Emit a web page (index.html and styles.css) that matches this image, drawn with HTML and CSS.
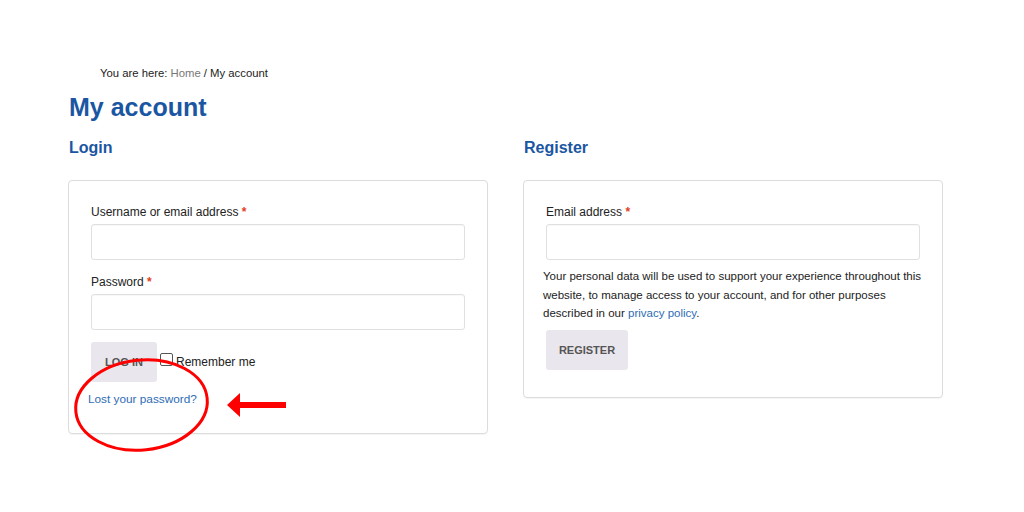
FILE: index.html
```html
<!DOCTYPE html>
<html>
<head>
<meta charset="utf-8">
<link rel="stylesheet" href="styles.css">
</head>
<body>
<div class="page">
  <nav class="crumbs">You are here: <a href="#" class="crumb-link">Home</a> / My account</nav>
  <h1 class="title">My account</h1>
  <div class="cols">
    <section class="col">
      <h2 class="col-title">Login</h2>
      <form class="box">
        <div class="row">
          <label class="lbl">Username or email address <span class="req">*</span></label>
          <input class="field" type="text">
        </div>
        <div class="row">
          <label class="lbl">Password <span class="req">*</span></label>
          <input class="field" type="password">
        </div>
        <div class="row row-inline">
          <button type="button" class="btn">LOG IN</button>
          <span class="check"></span>
          <span class="remember">Remember me</span>
        </div>
        <p class="lost"><a href="#" class="link">Lost your password?</a></p>
      </form>
    </section>
    <section class="col">
      <h2 class="col-title">Register</h2>
      <form class="box">
        <div class="row">
          <label class="lbl">Email address <span class="req">*</span></label>
          <input class="field" type="email">
        </div>
        <p class="privacy">Your personal data will be used to support your experience throughout this website, to manage access to your account, and for other purposes described in our <a href="#" class="link">privacy policy</a>.</p>
        <div class="row row-last">
          <button type="button" class="btn btn-reg">REGISTER</button>
        </div>
      </form>
    </section>
  </div>
</div>
<svg class="annot" width="1024" height="512" viewBox="0 0 1024 512">
  <ellipse cx="141.5" cy="405" rx="66" ry="45" fill="none" stroke="#f00" stroke-width="3" transform="rotate(-6 141.5 405)"/>
  <polygon points="227,405 240,393 240,402 286,402 286,408 240,408 240,417" fill="#f00"/>
</svg>
</body>
</html>
```

FILE: styles.css
```css
html, body {
  margin: 0;
  padding: 0;
  background: #fff;
}
body {
  font-family: "Liberation Sans", Arial, sans-serif;
  color: #222;
  position: relative;
  width: 1024px;
  height: 512px;
  overflow: hidden;
}
.page {
  padding: 65px 0 0 68px;
}
.crumbs {
  padding-left: 32px;
  font-size: 11.3px;
  line-height: 16px;
  color: #222;
}
.crumb-link {
  color: #777;
  text-decoration: none;
}
.title {
  margin: 11px 0 0 1px;
  font-size: 25px;
  line-height: 30px;
  font-weight: bold;
  color: #1b56a2;
}
.cols {
  display: flex;
  gap: 35px;
  margin-top: 15px;
}
.col {
  width: 420px;
}
.col-title {
  margin: 0 0 21px 1px;
  font-size: 16px;
  line-height: 22px;
  font-weight: bold;
  color: #1b56a2;
}
.box {
  border: 1px solid #dcdcdc;
  border-radius: 4px;
  padding: 20px 19px 20px 19px;
  box-shadow: 0 1px 1px rgba(0,0,0,0.04);
}
.row {
  padding: 3px;
  margin-bottom: 8px;
}
.lbl {
  display: block;
  font-size: 12px;
  line-height: 17px;
  margin-bottom: 3px;
  color: #222;
}
.req {
  color: #e2401c;
  font-weight: bold;
}
.field {
  display: block;
  box-sizing: border-box;
  width: 100%;
  height: 36px;
  border: 1px solid #e0e0e0;
  border-radius: 3px;
  background: #fff;
  box-shadow: inset 0 1px 1px rgba(0,0,0,0.03);
  margin: 0;
}
.row-inline {
  display: flex;
  align-items: center;
  margin-top: -2px;
  margin-bottom: 3px;
}
.btn {
  border: none;
  border-radius: 3px;
  background: #e9e6ed;
  color: #555;
  font-family: "Liberation Sans", Arial, sans-serif;
  font-weight: bold;
  font-size: 11px;
  height: 40px;
  width: 66px;
  padding: 0;
  margin: 0;
}
.btn-reg {
  width: 82px;
  display: block;
}
.check {
  box-sizing: border-box;
  width: 13px;
  height: 13px;
  border: 1px solid #555;
  border-radius: 2px;
  margin: 0 3px 0 3px;
  align-self: flex-start;
  margin-top: 11px;
}
.remember {
  font-size: 12px;
  color: #222;
}
.lost {
  margin: 6px 0 6px 0;
  font-size: 11.8px;
  line-height: 16px;
}
.link {
  color: #2d6cb5;
  text-decoration: none;
}
.privacy {
  margin: -4px 0 4px 0;
  font-size: 11.5px;
  line-height: 18.5px;
  color: #222;
}
.row-last {
  margin-bottom: 4px;
}
.annot {
  position: absolute;
  left: 0;
  top: 0;
  pointer-events: none;
}
```
